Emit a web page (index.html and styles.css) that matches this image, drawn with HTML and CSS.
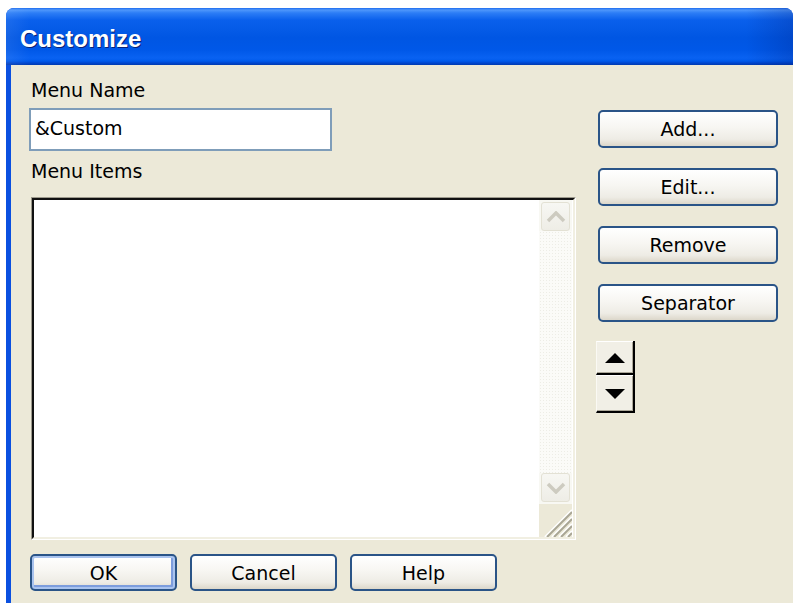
FILE: index.html
```html
<!DOCTYPE html>
<html lang="en">
<head>
<meta charset="utf-8">
<title>Customize</title>
<link rel="stylesheet" href="styles.css">
</head>
<body>
<div class="window">
  <div class="titlebar"><span class="title">Customize</span></div>
  <div class="client">
    <div class="main">
      <div class="label">Menu Name</div>
      <input class="field" type="text" value="&amp;Custom">
      <div class="label label-items">Menu Items</div>
      <div class="listbox">
        <div class="listbox-inner">
          <div class="list-body"></div>
          <div class="vscroll">
            <div class="sbtn sbtn-up">
              <svg width="20" height="12" viewBox="0 0 20 12"><polyline points="2,10 10,2 18,10" fill="none" stroke="#CDCBC0" stroke-width="3.5"/></svg>
            </div>
            <div class="track"></div>
            <div class="sbtn sbtn-down">
              <svg width="20" height="12" viewBox="0 0 20 12"><polyline points="2,2 10,10 18,2" fill="none" stroke="#CDCBC0" stroke-width="3.5"/></svg>
            </div>
            <div class="grip">
              <svg width="33" height="33" viewBox="0 0 33 33">
                <g stroke-width="2">
                  <line x1="6" y1="33" x2="33" y2="6" stroke="#fff"/>
                  <line x1="8" y1="33" x2="33" y2="8" stroke="#A9A695"/>
                  <line x1="13" y1="33" x2="33" y2="13" stroke="#fff"/>
                  <line x1="15" y1="33" x2="33" y2="15" stroke="#A9A695"/>
                  <line x1="20" y1="33" x2="33" y2="20" stroke="#fff"/>
                  <line x1="22" y1="33" x2="33" y2="22" stroke="#A9A695"/>
                  <line x1="27" y1="33" x2="33" y2="27" stroke="#fff"/>
                  <line x1="29" y1="33" x2="33" y2="29" stroke="#A9A695"/>
                </g>
              </svg>
            </div>
          </div>
        </div>
      </div>
      <div class="actions">
        <button class="btn btn-wide btn-default">OK</button>
        <button class="btn btn-wide">Cancel</button>
        <button class="btn btn-wide">Help</button>
      </div>
    </div>
    <div class="side">
      <button class="btn btn-side">Add...</button>
      <button class="btn btn-side">Edit...</button>
      <button class="btn btn-side">Remove</button>
      <button class="btn btn-side">Separator</button>
      <div class="spin">
        <div class="spin-btn spin-up">
          <svg width="22" height="10" viewBox="0 0 22 10"><polygon points="1,10 11,0 21,10" fill="#000"/></svg>
        </div>
        <div class="spin-btn spin-down">
          <svg width="22" height="10" viewBox="0 0 22 10"><polygon points="1,0 21,0 11,10" fill="#000"/></svg>
        </div>
      </div>
    </div>
  </div>
</div>
</body>
</html>
```

FILE: styles.css
```css
html, body {
  margin: 0;
  padding: 0;
}

body {
  background: #fff;
  overflow: hidden;
  font-family: "DejaVu Sans", "Liberation Sans", sans-serif;
  font-size: 19px;
  color: #000;
}

/* window frame */
.window {
  margin: 8px 0 0 6px;
  width: 787px;
  height: 600px;
  background: #0A50E0;
  border-radius: 8px 8px 0 0;
  display: flex;
  flex-direction: column;
}

.titlebar {
  height: 57px;
  flex: none;
  display: flex;
  align-items: center;
  padding-left: 14px;
  border-radius: 8px 8px 0 0;
  background:
    linear-gradient(90deg, rgba(255, 255, 255, 0.08) 0, transparent 3%, transparent 94%, rgba(0, 20, 110, 0.22) 100%),
    linear-gradient(180deg, #1C6BEF 0px, #4E97FB 2px, #2C7DF6 5px, #0A60EC 12px, #0056E3 30px, #0058E8 42px, #0962F2 50px, #005AEB 53px, #0046CF 55px, #003BB0 57px);
}

.title {
  font-family: "Liberation Sans", "DejaVu Sans", sans-serif;
  font-weight: bold;
  font-size: 24px;
  color: #fff;
  text-shadow: 1px 1px 0 #0A2275;
  margin-top: 4px;
}

/* dialog body */
.client {
  flex: 1;
  margin-left: 5px;
  background: #ECE9D8;
  display: flex;
  padding: 14px 0 9px 20px;
  box-shadow: 0 3px 0 #A9C3F0;
}

.main {
  width: 545px;
  display: flex;
  flex-direction: column;
}

.label {
  height: 22px;
  line-height: 22px;
  white-space: nowrap;
}

.label-items {
  margin-top: 9px;
}

.field {
  box-sizing: border-box;
  margin: 7px 0 0 -2px;
  width: 303px;
  height: 43px;
  border: 2px solid #7F9DB9;
  padding: 0 4px 3px 4px;
  background: #fff;
  font-family: "DejaVu Sans", "Liberation Sans", sans-serif;
  font-size: 19px;
  color: #000;
  outline: none;
}

/* list box with sunken border */
.listbox {
  margin-top: 15px;
  height: 343px;
  box-sizing: border-box;
  border-top: 1px solid #9D9A8C;
  border-left: 1px solid #9D9A8C;
  border-right: 1px solid #fff;
  border-bottom: 1px solid #fff;
  display: flex;
}

.listbox-inner {
  flex: 1;
  display: flex;
  border-top: 2px solid #111;
  border-left: 2px solid #111;
  border-right: 2px solid #F1EFE2;
  border-bottom: 2px solid #F1EFE2;
  background: #fff;
}

.list-body {
  flex: 1;
  background: #fff;
}

.vscroll {
  width: 33px;
  display: flex;
  flex-direction: column;
  background: #F8F8F3;
  margin-right: 1px;
}

.sbtn {
  box-sizing: border-box;
  height: 29px;
  margin: 2px 2px 0 2px;
  border: 1px solid #E3E1D4;
  border-radius: 3px;
  background: linear-gradient(180deg, #F7F7F3, #EEEDE6);
  display: flex;
  align-items: center;
  justify-content: center;
}

.sbtn-down {
  margin: 0 2px 2px 2px;
}

.track {
  flex: 1;
  background-color: #FBFBF8;
  background-image: radial-gradient(#EDEDE6 0.6px, transparent 0.8px);
  background-size: 3px 3px;
}

.grip {
  height: 33px;
  background: #ECE9D8;
  display: flex;
}

/* push buttons */
.btn {
  box-sizing: border-box;
  padding: 0;
  border: 2px solid #2A5487;
  border-radius: 5px;
  background: linear-gradient(180deg, #FFFFFF 0%, #F7F6F2 45%, #EEECE5 80%, #DCD7CA 100%);
  font-family: "DejaVu Sans", "Liberation Sans", sans-serif;
  font-size: 19px;
  color: #000;
  text-align: center;
}

.btn-default {
  box-shadow: inset 0 0 0 2px #A9C3EE, inset -2px -2px 0 2px #7D9DDD;
}

.actions {
  margin: 14px 0 0 -1px;
  display: flex;
  gap: 13px;
}

.btn-wide {
  width: 147px;
  height: 37px;
}

.side {
  margin-left: 20px;
  padding-top: 31px;
  display: flex;
  flex-direction: column;
  align-items: flex-start;
}

.btn-side {
  margin: 0 0 20px 2px;
  width: 180px;
  height: 38px;
}

/* spin control */
.spin {
  margin-top: -1px;
  width: 37px;
  display: flex;
  flex-direction: column;
  border-right: 2px solid #000;
}

.spin-btn {
  box-sizing: border-box;
  display: flex;
  align-items: center;
  justify-content: center;
  background: #F1EFE6;
  border-top: 1px solid #fff;
  border-left: 1px solid #FAF9F4;
  border-bottom: 2px solid #000;
  box-shadow: inset -1px -1px 0 #ACA899;
}

.spin-up {
  height: 34px;
}

.spin-down {
  height: 38px;
}
```
